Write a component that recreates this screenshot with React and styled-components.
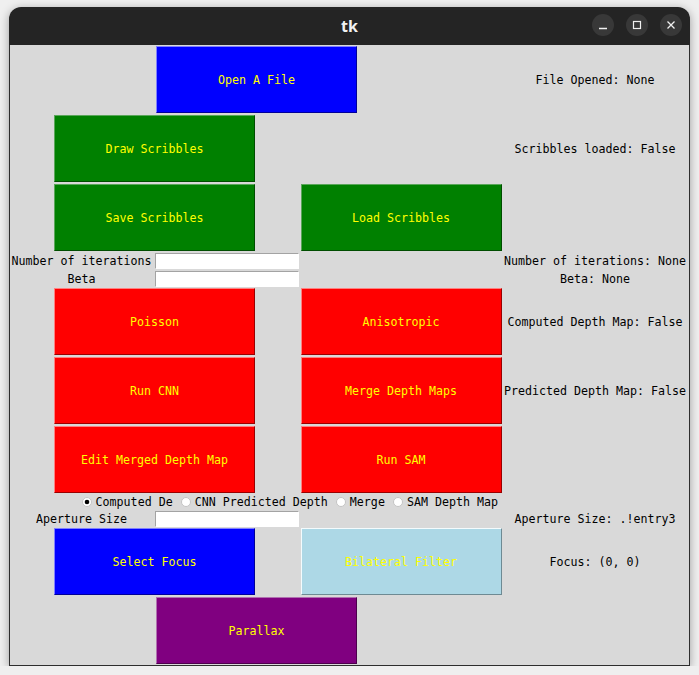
import styled, { createGlobalStyle } from 'styled-components';

const GlobalStyle = createGlobalStyle`
    html, body {
        margin: 0;
        padding: 0;
        background: #efefef;
    }
    body {
        padding: 7px 0 0 9px;
    }
`;

const MONO = `"DejaVu Sans Mono", "Liberation Mono", monospace`;

const Window = styled.div`
    width: 681px;
    border-radius: 12px 12px 0 0;
    overflow: hidden;
    box-shadow: 0 2px 10px rgba(0, 0, 0, 0.35);
`;

const TitleBar = styled.div`
    position: relative;
    height: 38px;
    background: #242424;
    display: flex;
    align-items: center;
    justify-content: center;
`;

const Title = styled.div`
    color: #f2f2f2;
    font-family: "Noto Sans", "DejaVu Sans", sans-serif;
    font-weight: 700;
    font-size: 16px;
`;

const Controls = styled.div`
    position: absolute;
    right: 8px;
    top: 7px;
    display: flex;
    gap: 12px;
`;

const ControlButton = styled.div`
    width: 22px;
    height: 22px;
    border-radius: 50%;
    background: #383838;
    display: flex;
    align-items: center;
    justify-content: center;
`;

const Content = styled.div`
    background: #d9d9d9;
    border: 1px solid #2e2e2e;
    border-top: 0;
    height: 620px;
    display: grid;
    grid-template-columns: 143px 146px 204px 186px;
    grid-template-rows: 69px 69px 69px 18px 17px 69px 69px 69px 16px 17px 69px 69px;
    font-family: ${MONO};
    font-size: 11.65px;
    color: #000;
`;

const TkButton = styled.div`
    grid-column: ${p => p.$col};
    grid-row: ${p => p.$row};
    justify-self: center;
    align-self: center;
    box-sizing: border-box;
    width: 201px;
    height: 67px;
    background: ${p => p.$bg};
    border: 1px solid;
    border-color: ${p => p.$light} ${p => p.$dark} ${p => p.$dark} ${p => p.$light};
    color: #ffff00;
    display: flex;
    align-items: center;
    justify-content: center;
    white-space: pre;
`;

const Label = styled.div`
    grid-column: ${p => p.$col};
    grid-row: ${p => p.$row};
    display: flex;
    align-items: center;
    justify-content: center;
    padding-right: ${p => (p.$col === 4 ? '2px' : '0')};
    white-space: pre;
`;

const Entry = styled.div`
    grid-column: 2;
    grid-row: ${p => p.$row};
    align-self: center;
    justify-self: end;
    box-sizing: border-box;
    width: 144px;
    height: 16px;
    background: #fff;
    border: 1px solid;
    border-color: #a3a3a3 #ffffff #ffffff #a3a3a3;
`;

const RadioRow = styled.div`
    grid-column: 1 / 4;
    grid-row: 9;
    display: flex;
    align-items: center;
    justify-content: flex-end;
    gap: 8px;
    padding-right: 5px;
`;

const Radio = styled.div`
    display: flex;
    align-items: center;
    gap: 4px;
    white-space: pre;
`;

const RadioMark = ({ checked }) => (
    <svg width="10" height="10" viewBox="0 0 10 10">
        <circle cx="5" cy="5" r="4.5" fill="#fff" stroke="#c4c4c4" />
        {checked && <circle cx="5" cy="5" r="2.3" fill="#000" />}
    </svg>
);

const COLORS = {
    blue: { bg: '#0000ff', light: '#8080ff', dark: '#000099' },
    green: { bg: '#008000', light: '#5aa65a', dark: '#004d00' },
    red: { bg: '#ff0000', light: '#ff8080', dark: '#990000' },
    light: { bg: '#add8e6', light: '#f4fbfd', dark: '#6e8a93' },
    purple: { bg: '#800080', light: '#b070b0', dark: '#4d004d' },
};

const Btn = ({ color, col, row, children }) => {
    const c = COLORS[color];
    return (
        <TkButton $bg={c.bg} $light={c.light} $dark={c.dark} $col={col} $row={row}>
            {children}
        </TkButton>
    );
};

const App = () => {
    return (
        <>
            <GlobalStyle />
            <Window>
                <TitleBar>
                    <Title>tk</Title>
                    <Controls>
                        <ControlButton>
                            <svg width="10" height="10" viewBox="0 0 10 10">
                                <line x1="1" y1="8.5" x2="9" y2="8.5" stroke="#f0f0f0" strokeWidth="1.3" />
                            </svg>
                        </ControlButton>
                        <ControlButton>
                            <svg width="10" height="10" viewBox="0 0 10 10">
                                <rect x="1.5" y="1.5" width="7" height="7" fill="none" stroke="#f0f0f0" strokeWidth="1.2" />
                            </svg>
                        </ControlButton>
                        <ControlButton>
                            <svg width="10" height="10" viewBox="0 0 10 10">
                                <path d="M1.5 1.5 L8.5 8.5 M8.5 1.5 L1.5 8.5" stroke="#f0f0f0" strokeWidth="1.3" />
                            </svg>
                        </ControlButton>
                    </Controls>
                </TitleBar>
                <Content>
                    <Btn color="blue" col="1 / 4" row={1}>Open A File</Btn>
                    <Label $col={4} $row={1}>File Opened: None</Label>

                    <Btn color="green" col="1 / 3" row={2}>Draw Scribbles</Btn>
                    <Label $col={4} $row={2}>Scribbles loaded: False</Label>

                    <Btn color="green" col="1 / 3" row={3}>Save Scribbles</Btn>
                    <Btn color="green" col={3} row={3}>Load Scribbles</Btn>

                    <Label $col={1} $row={4}>Number of iterations</Label>
                    <Entry $row={4} />
                    <Label $col={4} $row={4}>Number of iterations: None</Label>

                    <Label $col={1} $row={5}>Beta</Label>
                    <Entry $row={5} />
                    <Label $col={4} $row={5}>Beta: None</Label>

                    <Btn color="red" col="1 / 3" row={6}>Poisson</Btn>
                    <Btn color="red" col={3} row={6}>Anisotropic</Btn>
                    <Label $col={4} $row={6}>Computed Depth Map: False</Label>

                    <Btn color="red" col="1 / 3" row={7}>Run CNN</Btn>
                    <Btn color="red" col={3} row={7}>Merge Depth Maps</Btn>
                    <Label $col={4} $row={7}>Predicted Depth Map: False</Label>

                    <Btn color="red" col="1 / 3" row={8}>Edit Merged Depth Map</Btn>
                    <Btn color="red" col={3} row={8}>Run SAM</Btn>

                    <RadioRow>
                        <Radio><RadioMark checked />Computed De</Radio>
                        <Radio><RadioMark />CNN Predicted Depth</Radio>
                        <Radio><RadioMark />Merge</Radio>
                        <Radio><RadioMark />SAM Depth Map</Radio>
                    </RadioRow>

                    <Label $col={1} $row={10}>Aperture Size</Label>
                    <Entry $row={10} />
                    <Label $col={4} $row={10}>Aperture Size: .!entry3</Label>

                    <Btn color="blue" col="1 / 3" row={11}>Select Focus</Btn>
                    <Btn color="light" col={3} row={11}>Bilateral Filter</Btn>
                    <Label $col={4} $row={11}>Focus: (0, 0)</Label>

                    <Btn color="purple" col="1 / 4" row={12}>Parallax</Btn>
                </Content>
            </Window>
        </>
    );
};

export default App;
